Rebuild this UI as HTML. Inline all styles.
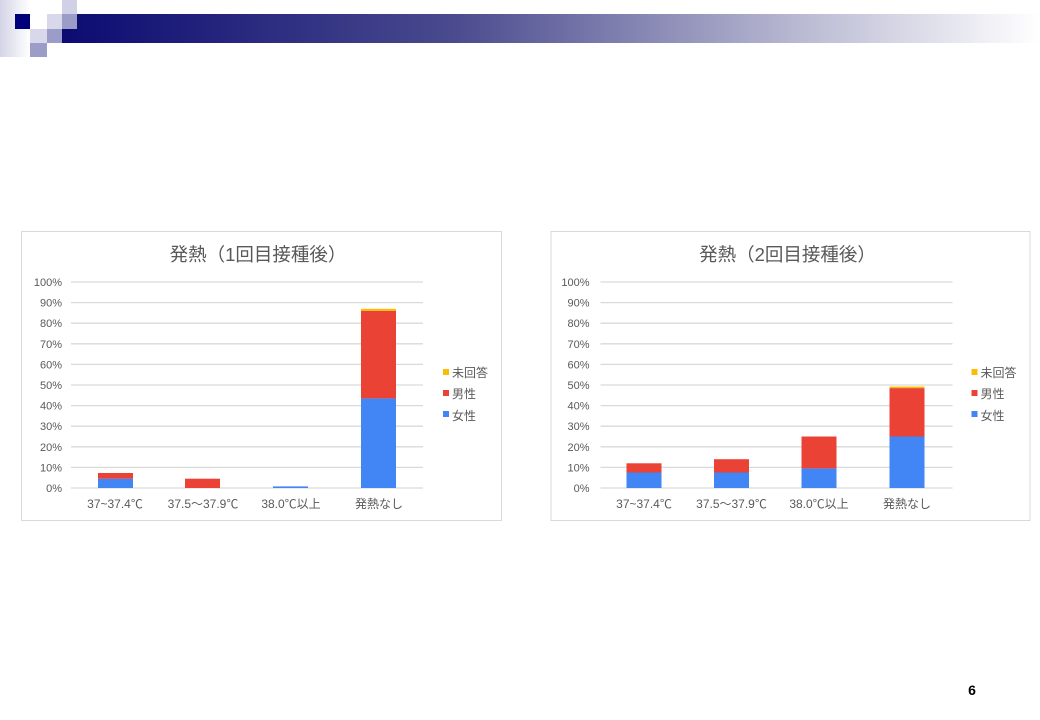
<!DOCTYPE html>
<html><head><meta charset="utf-8"><style>
html,body{margin:0;padding:0;background:#fff;}
svg{display:block;}
text{font-family:"Liberation Sans","Noto Sans CJK JP",sans-serif;}
</style></head><body>
<svg width="1040" height="720" viewBox="0 0 1040 720" xmlns="http://www.w3.org/2000/svg">
<defs>
<linearGradient id="hb" x1="0" x2="1" y1="0" y2="0">
<stop offset="0" stop-color="#0b0b72"/><stop offset="0.4" stop-color="#4a4a8e"/><stop offset="0.75" stop-color="#b8b8d2"/><stop offset="1" stop-color="#ffffff"/></linearGradient>
<linearGradient id="lc" x1="0" x2="1" y1="0" y2="0">
<stop offset="0" stop-color="#d4d4e8"/><stop offset="1" stop-color="#ffffff"/></linearGradient>
</defs>
<rect x="0" y="0" width="30" height="57" fill="url(#lc)"/>
<rect x="62" y="14" width="978" height="29" fill="url(#hb)"/>
<rect x="15" y="14" width="15" height="15" fill="#00007a"/>
<rect x="62" y="0" width="15" height="14" fill="#d0d0e6"/>
<rect x="47" y="14" width="15" height="15" fill="#d8d8ea"/>
<rect x="62" y="14" width="15" height="15" fill="#9c9cc8"/>
<rect x="30" y="29" width="17" height="14" fill="#d8d8ea"/>
<rect x="47" y="29" width="15" height="14" fill="#9c9cc8"/>
<rect x="30" y="43" width="17" height="14" fill="#9c9cc8"/>

<g id="c1">
<rect x="21.5" y="231.5" width="480" height="289" fill="#fff" stroke="#d9d9d9"/>
<text x="258" y="261" font-size="18.5" fill="#595959" text-anchor="middle">発熱（1回目接種後）</text>
<g stroke="#d9d9d9" stroke-width="1.3">
<line x1="71" x2="423" y1="282" y2="282"/><line x1="71" x2="423" y1="302.6" y2="302.6"/><line x1="71" x2="423" y1="323.2" y2="323.2"/><line x1="71" x2="423" y1="343.8" y2="343.8"/><line x1="71" x2="423" y1="364.4" y2="364.4"/><line x1="71" x2="423" y1="385" y2="385"/><line x1="71" x2="423" y1="405.6" y2="405.6"/><line x1="71" x2="423" y1="426.2" y2="426.2"/><line x1="71" x2="423" y1="446.8" y2="446.8"/><line x1="71" x2="423" y1="467.4" y2="467.4"/><line x1="71" x2="423" y1="488" y2="488"/>
</g>
<g font-size="11" fill="#595959" text-anchor="end">
<text x="62" y="286">100%</text><text x="62" y="306.6">90%</text><text x="62" y="327.2">80%</text><text x="62" y="347.8">70%</text><text x="62" y="368.4">60%</text><text x="62" y="389">50%</text><text x="62" y="409.6">40%</text><text x="62" y="430.2">30%</text><text x="62" y="450.8">20%</text><text x="62" y="471.4">10%</text><text x="62" y="492">0%</text>
</g>
<rect x="98" y="478.7" width="35" height="9.3" fill="#4285f4"/>
<rect x="98" y="473" width="35" height="5.7" fill="#ea4335"/>
<rect x="185" y="478.7" width="35" height="9.3" fill="#ea4335"/>
<rect x="273" y="486.4" width="35" height="1.6" fill="#4285f4"/>
<rect x="361" y="398.4" width="35" height="89.6" fill="#4285f4"/>
<rect x="361" y="310.8" width="35" height="87.6" fill="#ea4335"/>
<rect x="361" y="308.8" width="35" height="2" fill="#fbbc04"/>
<g font-size="12" fill="#595959" text-anchor="middle">
<text x="115" y="508">37~37.4℃</text><text x="203" y="508">37.5～37.9℃</text><text x="291" y="508">38.0℃以上</text><text x="379" y="508">発熱なし</text>
</g>
<rect x="443" y="369" width="6" height="6" fill="#fbbc04"/>
<rect x="443" y="390" width="6" height="6" fill="#ea4335"/>
<rect x="443" y="411" width="6" height="6" fill="#4285f4"/>
<g font-size="12" fill="#595959">
<text x="452" y="377">未回答</text><text x="452" y="398">男性</text><text x="452" y="420">女性</text>
</g>
</g>

<g transform="translate(529.5,0)">
<rect x="21.5" y="231.5" width="479" height="289" fill="#fff" stroke="#d9d9d9"/>
<text x="258" y="261" font-size="18.5" fill="#595959" text-anchor="middle">発熱（2回目接種後）</text>
<g stroke="#d9d9d9" stroke-width="1.3">
<line x1="71" x2="423" y1="282" y2="282"/><line x1="71" x2="423" y1="302.6" y2="302.6"/><line x1="71" x2="423" y1="323.2" y2="323.2"/><line x1="71" x2="423" y1="343.8" y2="343.8"/><line x1="71" x2="423" y1="364.4" y2="364.4"/><line x1="71" x2="423" y1="385" y2="385"/><line x1="71" x2="423" y1="405.6" y2="405.6"/><line x1="71" x2="423" y1="426.2" y2="426.2"/><line x1="71" x2="423" y1="446.8" y2="446.8"/><line x1="71" x2="423" y1="467.4" y2="467.4"/><line x1="71" x2="423" y1="488" y2="488"/>
</g>
<g font-size="11" fill="#595959" text-anchor="end">
<text x="60" y="286">100%</text><text x="60" y="306.6">90%</text><text x="60" y="327.2">80%</text><text x="60" y="347.8">70%</text><text x="60" y="368.4">60%</text><text x="60" y="389">50%</text><text x="60" y="409.6">40%</text><text x="60" y="430.2">30%</text><text x="60" y="450.8">20%</text><text x="60" y="471.4">10%</text><text x="60" y="492">0%</text>
</g>
<rect x="97" y="472.5" width="35" height="15.5" fill="#4285f4"/>
<rect x="97" y="463.3" width="35" height="9.2" fill="#ea4335"/>
<rect x="184.5" y="472.5" width="35" height="15.5" fill="#4285f4"/>
<rect x="184.5" y="459.2" width="35" height="13.3" fill="#ea4335"/>
<rect x="272" y="468.4" width="35" height="19.6" fill="#4285f4"/>
<rect x="272" y="436.5" width="35" height="31.9" fill="#ea4335"/>
<rect x="360" y="436.5" width="35" height="51.5" fill="#4285f4"/>
<rect x="360" y="388.1" width="35" height="48.4" fill="#ea4335"/>
<rect x="360" y="386.6" width="35" height="1.5" fill="#fbbc04"/>
<g font-size="12" fill="#595959" text-anchor="middle">
<text x="114.5" y="508">37~37.4℃</text><text x="202" y="508">37.5～37.9℃</text><text x="289.5" y="508">38.0℃以上</text><text x="377.5" y="508">発熱なし</text>
</g>
<rect x="442" y="369" width="6" height="6" fill="#fbbc04"/>
<rect x="442" y="390" width="6" height="6" fill="#ea4335"/>
<rect x="442" y="411" width="6" height="6" fill="#4285f4"/>
<g font-size="12" fill="#595959">
<text x="451" y="377">未回答</text><text x="451" y="398">男性</text><text x="451" y="420">女性</text>
</g>
</g>

<text x="972" y="695" font-size="14" font-weight="bold" fill="#000" text-anchor="middle">6</text>
</svg>
</body></html>
